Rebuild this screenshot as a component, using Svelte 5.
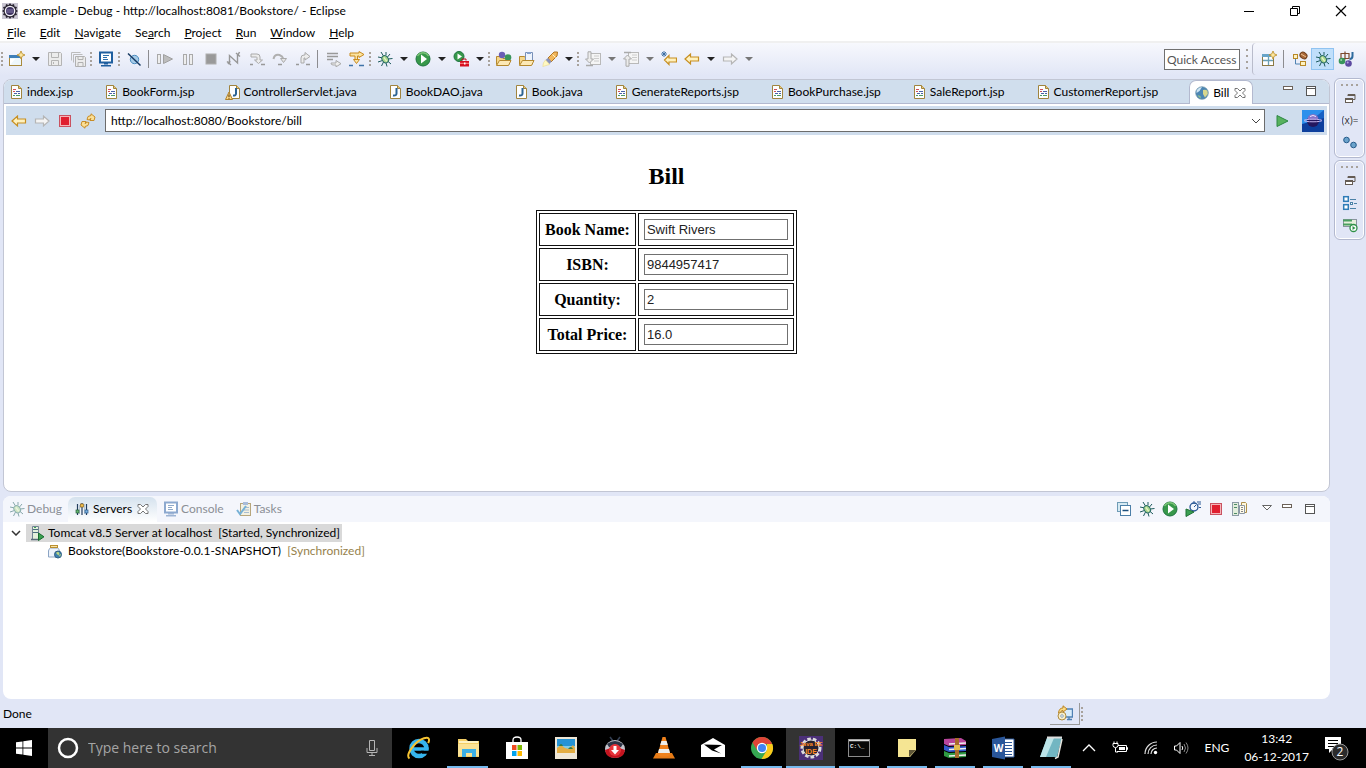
<script>
  const icons = {
    eclipse: `<rect width="16" height="16" fill="#c9c6d2"/><path d="M8 0l1.500 2 2.500-1 .5 2.500 2.500.5-1 2.500 2 1.500-2 1.500 1 2.500-2.500.5-.5 2.500-2.500-1-1.500 2-1.500-2-2.500 1-.5-2.500-2.500-.5 1-2.500-2-1.500 2-1.500-1-2.500 2.500-.5.5-2.500 2.500 1z" fill="#2b2733"/><circle cx="8" cy="8" r="5.300" fill="#f3f1f7"/><circle cx="8" cy="8" r="4" fill="#3e3360"/><path d="M4.500 7h7M4.500 9h7" stroke="#8a80b0"/>`,
    newwiz: `<rect x=".5" y="4.500" width="12" height="10" fill="#eef7fb" stroke="#a98a3c"/><rect x="0" y="4" width="12" height="3" fill="#3f7fb8"/><path d="M1 14V8h5z" fill="#fff"/><path d="M12 0l1.200 2.800L16 4l-2.800 1.200L12 8l-1.200-2.800L8 4l2.800-1.200z" fill="#fbe6a0" stroke="#b98a24" stroke-width=".8"/>`,
    save: `<path d="M1.500 1.500h12l1 1v12h-13z" fill="#ececec" stroke="#b4b4b4"/><path d="M4.500 1.500v5h7v-5M4.500 14.500v-5h7v5M6.500 11v2" fill="none" stroke="#b4b4b4"/>`,
    saveall: `<path d="M1.500 9.500v-8h9" fill="none" stroke="#bcbcbc"/><path d="M3.500 11.500v-8h9" fill="none" stroke="#bcbcbc"/><path d="M5.500 5.500h9l1 1v9h-10z" fill="#ececec" stroke="#b0b0b0"/><path d="M8 5.500v3h5v-3M8 15.500v-4h5v4" fill="none" stroke="#b0b0b0"/>`,
    monitor: `<rect x="2" y="1.500" width="12" height="10" fill="#fff" stroke="#1f5f9f" stroke-width="2"/><path d="M5 4.500h6M5 6.500h4M5 8.500h5" stroke="#2c6dab"/><path d="M6 12h4v1.500H6zM3 14h10v1.500H3z" fill="#1f5f9f"/>`,
    skip: `<circle cx="8.500" cy="8.500" r="4.200" fill="#a5cbe8" stroke="#4a8cc0"/><path d="M2 2.500L14.500 14.500" stroke="#173a63" stroke-width="1.500"/>`,
    resume: `<rect x=".5" y="3.500" width="3" height="9" fill="#eee" stroke="#a9a9a9"/><path d="M6.500 3.500v9l9-4.500z" fill="#bdbdbd" stroke="#a0a0a0"/>`,
    pause: `<rect x="3.500" y="3.500" width="3" height="10" fill="#eee" stroke="#aaa"/><rect x="9.500" y="3.500" width="3" height="10" fill="#eee" stroke="#aaa"/>`,
    stopgrey: `<rect x="3" y="3" width="10" height="10" fill="#999" stroke="#aeaeae"/>`,
    disconnect: `<path d="M3.500 12V4.500L11.500 12V4" fill="none" stroke="#979797" stroke-width="1.400"/><path d="M1 10.500l4 3.500M2 13l2-3M10 2l4 3.500M13.500 1l-2 4" stroke="#979797" stroke-width="1.500"/>`,
    into: `<path d="M2 3h6q3 0 3 3v3h2.500l-4 3.500-4-3.500H8V6.500Q8 6 7 6H2z" fill="#ececec" stroke="#aaa"/><path d="M1 13.500h3M12 13.500h4" stroke="#999" stroke-width="1.500"/>`,
    over: `<path d="M1.500 8q1-5 6-4 3 1 4 4" fill="none" stroke="#b0b0b0" stroke-width="2"/><path d="M8.500 7.500h6l-3 4z" fill="#e4e4e4" stroke="#aaa"/><path d="M6 13.500h4" stroke="#999" stroke-width="1.500"/>`,
    ret: `<path d="M6 12V7q0-3 3-3h1V1.500l5 4-5 3.500V7H9v5z" fill="#ececec" stroke="#aaa"/><path d="M1 13.500h3M11 13.500h4" stroke="#999" stroke-width="1.500"/>`,
    drop: `<path d="M1 2.500h11M1 5.500h11M1 8.500h6" stroke="#999" stroke-width="1.600"/><path d="M5 12h5V9.500l5 3.200-5 3.200V14H7q-2 0-2-2z" fill="#eee" stroke="#aaa"/>`,
    filters: `<path d="M1 2h9V.5l5 3-5 3V5H8.500v4H6V5H1z" fill="#fbe3a0" stroke="#c98a1c"/><path d="M4.500 8.500h6l-3 4z" fill="#fbe6a8" stroke="#c98a1c"/><path d="M0 14.500h4M10 14.500h5" stroke="#3f73a8" stroke-width="1.600"/>`,
    bug: `<path d="M4 1l2.500 4M9 1v3M13 3l-2.500 3M1 6l5 1M15.500 7.500L11 8M1 11l4.500-1.500M14 13l-3.500-3M4.500 15l2-4M10 15.500L9 12" stroke="#1d5a5c"/><ellipse cx="8.200" cy="8.200" rx="3" ry="3.800" transform="rotate(-35 8.200 8.200)" fill="#a9d68c" stroke="#2a6d66"/><path d="M6.800 6.300l3 4" stroke="#e7f5c8" stroke-width="1.300"/>`,
    run: `<circle cx="8" cy="8" r="7" fill="#37984a" stroke="#1f7440"/><path d="M2.500 5a6.300 6.300 0 0 1 11 0" fill="none" stroke="#79c276" stroke-width="1.500"/><path d="M6 3.500v9l6-4.500z" fill="#fff"/>`,
    ext: `<circle cx="6" cy="5.500" r="5" fill="#37984a" stroke="#1f7440"/><path d="M4.500 2.500v6l4.500-3z" fill="#fff"/><path d="M9 9.500V8h4v1.500" fill="none" stroke="#b80d1d"/><rect x="7" y="10" width="9" height="5.500" fill="#d5101f"/><path d="M7 12.300h9" stroke="#ff8b8b"/><path d="M11 11.500h1.500v2H11z" fill="#fff"/>`,
    opentype: `<path d="M.5 13.500v-8h5l1.500 2h6v6z" fill="#f6d68a" stroke="#b5892f"/><circle cx="6" cy="4" r="3.200" fill="#6a5db5"/><circle cx="12" cy="6.500" r="3.300" fill="#3a945a"/><path d="M.5 14.500l3-5h11.500l-2.500 5z" fill="#fde9b6" stroke="#b5892f"/>`,
    opentask: `<path d="M.5 13.500v-8h5l1.500 2h6v6z" fill="#f6d68a" stroke="#b5892f"/><path d="M6.500 1.500h7v8h-7z" fill="#edf3fc" stroke="#7890b8"/><path d="M8 1h4v2H8z" fill="#83a0cc"/><path d="M.5 14.500l3-5h11.500l-2.500 5z" fill="#fde9b6" stroke="#b5892f"/>`,
    torch: `<path d="M6 7L12 1h3.500L15 5l-6 6z" fill="#f2b75c" stroke="#b17522"/><path d="M10.500 3.500l3 3" stroke="#fff4c7"/><path d="M6 7l3.500 3.500L7.500 13 3.500 9z" fill="#8a93b8"/><path d="M3.500 9l4 4.500L.8 15.500q0-4 2.700-6.500z" fill="#fff8c0" stroke="#ead98c" stroke-width=".6"/>`,
    nextann: `<rect x="5.500" y="2.500" width="10" height="11" fill="#f5f5f5" stroke="#b9b9b9"/><path d="M9 5h5M9 7.500h5M9 10h5" stroke="#ccc"/><path d="M3 .8h3V8h2.500l-4 4-4-4H3z" fill="#ececec" stroke="#aaa"/><path d="M1 14.500h7" stroke="#aaa" stroke-width="1.500"/>`,
    prevann: `<rect x="5.500" y="1.500" width="10" height="11" fill="#f5f5f5" stroke="#b9b9b9"/><path d="M9 4h5M9 6.500h5M9 9h5" stroke="#ccc"/><path d="M3 15.200h3V8h2.500l-4-4-4 4H3z" fill="#ececec" stroke="#aaa"/><path d="M1 1.500h7" stroke="#aaa" stroke-width="1.500"/>`,
    lastedit: `<path d="M3.500 9l4.500-4.500V7h7.500v4H8v2.500z" fill="#fff1bd" stroke="#c78f22" stroke-width="1.200"/><path d="M3 0v6M0 3h6M1 1l4 4M5 1L1 5" stroke="#3469a0" stroke-width=".9"/>`,
    back: `<path d="M1 8l5.500-5V6H14.500v4H6.500v3z" fill="#fff1bd" stroke="#c78f22" stroke-width="1.200"/>`,
    fwd: `<path d="M15 8L9.500 3V6H1.500v4h8v3z" fill="#f4f4f4" stroke="#b5b5b5" stroke-width="1.200"/>`,
    newpersp: `<rect x="1.500" y="3.500" width="11" height="11" fill="#fff" stroke="#8b7a45"/><rect x="1" y="3" width="9" height="3" fill="#68a4c8"/><path d="M2 9.500h10M7.500 6v8" stroke="#6a9fb5" stroke-width="1.300"/><path d="M12 0l1.200 2.800L16 4l-2.800 1.200L12 8l-1.200-2.800L8 4l2.800-1.200z" fill="#fbe6a0" stroke="#b98a24" stroke-width=".8"/>`,
    jee: `<path d="M3.500 7v6h6M3.500 6V3" fill="none" stroke="#4f83b2"/><rect x="1.500" y="3.500" width="4" height="4" fill="#fff2c2" stroke="#b88927"/><rect x="8.500" y="10.500" width="5" height="4" fill="#fff2c2" stroke="#b88927"/><ellipse cx="11.500" cy="4.500" rx="3.700" ry="3" transform="rotate(35 11.500 4.500)" fill="#a9683a" stroke="#6f3d19"/><path d="M9 3l5 3" stroke="#edc18e"/>`,
    java: `<path d="M3 2.500h8v5H3zM7 .5v8" fill="none" stroke="#7c4a2e" stroke-width="1.200"/><path d="M14.500 1v4q0 3-3 3" fill="none" stroke="#2d6a9d" stroke-width="2"/><circle cx="4" cy="10" r="3.300" fill="#38965a"/><circle cx="10.500" cy="12.500" r="3.300" fill="#5d4aa0"/><circle cx="3.200" cy="9" r="1" fill="#9bd3a6"/><circle cx="9.700" cy="11.500" r="1" fill="#b3a6de"/>`,
    jsp: `<path d="M2.500 1.500h7l3 3v10h-10z" fill="#fdfefe" stroke="#a0843e"/><path d="M9.500 1.500v3h3" fill="#e9c877" stroke="#a0843e"/><path d="M4 5.500h3M4 7.500h2" stroke="#d0505a"/><path d="M7 7.500h4M5 9.500h3M9 9.500h2" stroke="#4a62a8"/><path d="M4 11.500h2M7 11.500h4" stroke="#4a9b68"/>`,
    javafile: `<path d="M2.500 1.500h7l3 3v10h-10z" fill="#fdfefe" stroke="#a0843e"/><path d="M9.500 1.500v3h3" fill="#e9c877" stroke="#a0843e"/><path d="M8.500 4v5.500q0 2.500-3.500 2" fill="none" stroke="#2b6393" stroke-width="2"/>`,
    javawarn: `<path d="M4.500 1.500h7l3 3v10h-10z" fill="#fdfefe" stroke="#a0843e"/><path d="M11.500 1.500v3h3" fill="#e9c877" stroke="#a0843e"/><path d="M11 4v5.500q0 2.500-3 2" fill="none" stroke="#2b6393" stroke-width="2"/><path d="M4 8l3.500 7.500H.5z" fill="#fbd98a" stroke="#b0812b"/><path d="M4 10.500v2.500M4 13.700v1" stroke="#6b4710" stroke-width="1.200"/>`,
    globe: `<circle cx="8" cy="8" r="6.300" fill="#4c86b4" stroke="#7196a8" stroke-width=".7"/><path d="M9 5q3-1 4.500 1l.3 3-2.800 3.500L9 9z" fill="#d8d78e"/><path d="M3.500 10l3 1 .5 2.500q-2.500-.5-3.500-3.500z" fill="#8dbf8d"/><path d="M2.500 8Q2 3 8 2L5.500 6z" fill="#cfe6f4"/>`,
    close: `<path d="M3 3.500h2.500L8 6l2.500-2.500H13v2L10.500 8l2.500 2.500v2h-2.500L8 10l-2.500 2.500H3v-2L5.500 8 3 5.500z" fill="#fff" stroke="#666" stroke-width=".9"/>`,
    min: `<rect x="3.500" y="3.500" width="9" height="3" fill="#fff" stroke="#6c6259"/>`,
    max: `<rect x="3.500" y="3.500" width="9" height="9" fill="#fff" stroke="#555"/><path d="M3 5.500h10" stroke="#555"/>`,
    stopred: `<rect x="2.500" y="2.500" width="11" height="11" fill="#f4b4b8" stroke="#c95260"/><rect x="4" y="4" width="8" height="8" fill="#e01e2f"/>`,
    refresh: `<path d="M7 6.500q0-4 4-4V.8L15 4l-1 3.500-4 0 1-2q-1.500 0-1.500 1.500z" fill="#fbdf96" stroke="#c78c27"/><path d="M9 9.500q0 4-4 4v1.700L1 12l1-3.500 4 0-1 2q1.500 0 1.500-1.500z" fill="#fbdf96" stroke="#c78c27"/>`,
    go: `<path d="M3 2.500v11L14 8z" fill="#58b25e" stroke="#2c8843"/>`,
    restore: `<path d="M6 5V3.500h7v5h-2" fill="none" stroke="#655c54"/><path d="M6 4h7" stroke="#655c54" stroke-width="2"/><rect x="3.500" y="7.500" width="7" height="4" fill="#fff" stroke="#655c54"/><path d="M3 8h8" stroke="#655c54" stroke-width="2"/>`,
    vars: `<text x="8" y="11" text-anchor="middle" font-family="Open Sans, sans-serif" font-size="10" fill="#333">(x)=</text>`,
    points: `<circle cx="4.500" cy="5" r="2.800" fill="#6ba3cc" stroke="#245a8a"/><circle cx="11.500" cy="10" r="2.800" fill="#6ba3cc" stroke="#245a8a"/>`,
    outline: `<rect x="1.700" y="1.700" width="4.600" height="4.600" fill="#fff" stroke="#2f7cb8" stroke-width="1.500"/><rect x="1.700" y="9.700" width="4.600" height="4.600" fill="#fff" stroke="#2f7cb8" stroke-width="1.500"/><path d="M8 4.500h6M8 13.500h6M12 8.500h3" stroke="#4c82a8"/><rect x="8.500" y="7.500" width="2" height="2" fill="#fff" stroke="#4c82a8"/>`,
    snip: `<rect x="1.500" y="2.500" width="13" height="7" fill="#e7f0dc" stroke="#8a94a0"/><path d="M1 3.500h9" stroke="#4aa060" stroke-width="2"/><path d="M1 7.500h9" stroke="#4aa060" stroke-width="2"/><circle cx="11.500" cy="11" r="3.500" fill="#fff" stroke="#2f9148" stroke-width="1.300"/><path d="M10.500 9v4l3-2z" fill="#2f9148"/>`,
    servers: `<path d="M3.500 3v11M8 2v12M12.500 3v11" stroke="#223d5e" stroke-width="1.200"/><path d="M5.500 4v9M10.500 3v10" stroke="#a9bcc8" stroke-width=".8"/><rect x="2" y="9" width="3" height="3" fill="#66b56f" stroke="#225f3a" stroke-width=".7"/><rect x="6.500" y="3" width="3" height="3" fill="#f2c14e" stroke="#91651a" stroke-width=".7"/><rect x="11" y="9" width="3" height="3" fill="#7cb3e0" stroke="#27588a" stroke-width=".7"/>`,
    console: `<rect x="2" y="1.500" width="12" height="10" fill="#fff" stroke="#8da9cf" stroke-width="2"/><path d="M5 4.500h6M5 6.500h4M5 8.500h5" stroke="#8fa9c9"/><path d="M5 12h6v1.500H5zM3 14h10v1.500H3z" fill="#9db4d4"/>`,
    tasks: `<rect x="4.500" y="2.500" width="10" height="12" fill="#f3f1e3" stroke="#b7a67c"/><rect x="7" y="1" width="5" height="3" fill="#a9bcda"/><path d="M8 6.500h5M8 9h5M8 11.500h5" stroke="#a9bccf"/><path d="M1 9l3 4 6-8" fill="none" stroke="#76b1d6" stroke-width="2"/>`,
    collapse: `<rect x="1.500" y="1.500" width="10" height="9" fill="#d6eaf3" stroke="#6f9cb6"/><rect x="4.500" y="4.500" width="10" height="10" fill="#fff" stroke="#4c7fa8"/><path d="M6.500 9.500h6" stroke="#1d4f7c" stroke-width="1.500"/>`,
    profile: `<circle cx="9" cy="6" r="4" fill="#f4f8fd" stroke="#2c5a96" stroke-width="1.300"/><path d="M9 0v3M9 6l2-2M12 1h4M13 3h3M14 6.500h2" stroke="#2c5a96"/><path d="M1 8v7.500L9 11z" fill="#3ba052" stroke="#1f7035"/>`,
    publish: `<rect x="1.500" y="1.500" width="6" height="13" fill="#e2eedc" stroke="#8b9ba6"/><path d="M3 3.500h3M3 6.500h3M3 12.500h3" stroke="#4f8b68"/><path d="M10.500 1.500h4l1 1v9h-5z" fill="#fff7dc" stroke="#ad8f49"/><path d="M8.500 4.500h5v8h-5z" fill="#fffbe9" stroke="#8a97a5"/><path d="M10 6.500h2M10 8.500h2M10 10.500h2" stroke="#888"/>`,
    menu: `<path d="M3.500 4.500h9L8 9z" fill="#fff" stroke="#666"/>`,
    server: `<path d="M3.500 1.500h6v13h-6z" fill="#e3f0dc" stroke="#718494"/><path d="M4 4.500h5M4 7.500h5" stroke="#4b6e7e"/><path d="M5 2.500h2" stroke="#3ba052"/><path d="M2 14.500h8" stroke="#596b79" stroke-width="1.500"/><path d="M9.500 8v7.500l5.500-3.700z" fill="#3ba052" stroke="#176b30"/>`,
    module: `<path d="M3.500 5h7q2 1 2 3v6h-11V8q0-2 2-3z" fill="#eef3fb" stroke="#8ba4c4"/><rect x="3.500" y="2.500" width="7" height="2" fill="#fbe3a1" stroke="#b98f33"/><circle cx="11" cy="11.500" r="3.500" fill="#3d7fae" stroke="#2f5f84"/><path d="M9 10q2-2 3.500 0l-1 2.500zM12 12l2-1-1 3z" fill="#bfd980"/>`,
    launch: `<path d="M9 4h6.500v8H9" fill="#d8ecfb" stroke="#4f81b4" stroke-width="1.400"/><path d="M10 14.500h5M12 12v2" stroke="#4f81b4" stroke-width="1.400"/><path d="M1.500 8Q2 3 6 3V.8L10 4 6 7V5.500Q4 5 3.500 8z" fill="#fbdc86" stroke="#bb8420"/><circle cx="5" cy="11" r="4" fill="#f7edc9" stroke="#b08d3e"/><circle cx="5" cy="11" r="1.300" fill="#fff" stroke="#8fa7b8"/>`,
    orb: `<rect width="22" height="22" fill="#1761c4"/><path d="M0 0h22L0 18z" fill="#2c90ec"/><path d="M0 14l22-6v14H0z" fill="#0d3f9d"/><circle cx="11" cy="11" r="6" fill="#24175e"/><path d="M5.500 9.500a5.500 5.500 0 0 1 11 0z" fill="#8573c9"/><ellipse cx="11" cy="10.500" rx="9" ry="1.300" fill="none" stroke="#c4b6ef"/><path d="M8 6.500q3-2 6 0" stroke="#efe8ff" fill="none"/>`
  };

  const apps = {
    ie: `<circle cx="12" cy="12.500" r="7.500" fill="none" stroke="#36b5ee" stroke-width="4.500"/><path d="M6 13h15.500" stroke="#36b5ee" stroke-width="3.500"/><path d="M14 14.700h10v3h-9z" fill="#000"/><path d="M2.500 22.500C-2 19 8 5 17 2.200c5-1.600 6 .8 4.200 5" fill="none" stroke="#f7c432" stroke-width="2"/>`,
    explorer: `<path d="M2 3h8l2 2h11v16H2z" fill="#f3ce66"/><rect x="3" y="5" width="19" height="2" fill="#fff3c4"/><path d="M2 8h21v12H2z" fill="#fbe294"/><path d="M6 21v-8h14v8h-4v-4h-6v4z" fill="#3cb0e6"/>`,
    store: `<path d="M8 6V4q0-3 4-3t4 3v2" fill="none" stroke="#fff" stroke-width="1.300"/><path d="M1 6h22v17H1z" fill="#fff"/><path d="M7 9h4.500v5H7z" fill="#f04e23"/><path d="M12.500 9H17v5h-4.500z" fill="#7eb901"/><path d="M7 15h4.500v5H7z" fill="#02a3ee"/><path d="M12.500 15H17v5h-4.500z" fill="#feb801"/>`,
    photo: `<path d="M1 1h22v22H1z" fill="#efe7d6"/><path d="M3 3h18v14H3z" fill="#2693d4"/><path d="M3 10h18v4H3z" fill="#82cbe4"/><path d="M3 17v-5l4-3 4 3 4 1 4-4 2 3v5z" fill="#e3ad43"/><path d="M5 10q2-4 4 0zM14 13q3-4 5 0z" fill="#377941"/>`,
    ytd: `<path d="M7 1l3 4M17 1l-3 4" stroke="#354054" stroke-width="1.500"/><ellipse cx="12" cy="13" rx="10" ry="9" fill="#c3c5cd"/><path d="M4 8q8-6 16 0l-2 3H6z" fill="#2c3446"/><path d="M2 14q10-5 20 0-1 8-10 8T2 14z" fill="#c4141f"/><circle cx="12" cy="14" r="6" fill="#e8343a"/><path d="M10.500 10h3v4H16l-4 4.500L8 14h2.500z" fill="#fff"/>`,
    vlc: `<path d="M4 17h16l3 5.500H1z" fill="#e77b16"/><path d="M10.500 1h3l5 18q-6.500 3-13 0z" fill="#f0821c"/><path d="M9.400 5h5.200l1.200 4H8.200zM7 13h10l1 4H6z" fill="#eeeeea"/>`,
    mail: `<path d="M0 9l12-7 12 7v12H0z" fill="#fff"/><path d="M3 8.500L21 9l-8 4.500 7 4-9-3z" fill="#000"/>`,
    chrome: `<circle cx="12" cy="12" r="11" fill="#36a852"/><path d="M2.500 6.500A11 11 0 0 1 21.500 6.500L22 8H12l-5 6z" fill="#df4437"/><path d="M22.300 8A11 11 0 0 1 11.500 23L17 14V8z" fill="#fbc91b"/><circle cx="12" cy="12" r="5.200" fill="#fff"/><circle cx="12" cy="12" r="4" fill="#4285f4"/>`,
    jee: `<rect width="24" height="24" fill="#4b3078"/><circle cx="12" cy="12" r="9" fill="none" stroke="#ddd" stroke-width="3" stroke-dasharray="3.500 2"/><circle cx="12" cy="12" r="8" fill="#27212f" stroke="#ddd"/><text x="12" y="10" text-anchor="middle" font-family="Liberation Sans, sans-serif" font-size="6" font-weight="700" fill="#ff8a24">Java EE</text><text x="12" y="18" text-anchor="middle" font-family="Liberation Sans, sans-serif" font-size="7" font-weight="700" fill="#ff8a24">IDE</text>`,
    cmd: `<rect x="1.500" y="3.500" width="21" height="17" fill="#080808" stroke="#8c8c8c"/><path d="M2 4.500h20" stroke="#ddd" stroke-width="1.500"/><text x="3" y="12" font-family="Liberation Mono, monospace" font-size="6" font-weight="700" fill="#eee">C:\\_</text>`,
    sticky: `<path d="M3 3h18v11l-6 7H3z" fill="#f5e593"/><path d="M21 14l-7 7v-7z" fill="#5f5738"/>`,
    winrar: `<path d="M1 3l17-1 5 3v4l-17 1-5-2z" fill="#b9459c"/><path d="M1 9l5 2 17-1v5l-17 1-5-2z" fill="#3358cb"/><path d="M1 15l5 2 17-1v5l-17 1-5-2z" fill="#2f9a43"/><path d="M6 8l17-1M6 13.500l17-1M6 20l17-1" stroke="#eee" stroke-width="1.300"/><path d="M12 2h4v20h-4z" fill="#a86b2c"/><rect x="11" y="9" width="6" height="5" fill="#e3bd50"/>`,
    word: `<path d="M12 3h11v18H12z" fill="#fff" stroke="#2a5699"/><path d="M14 6.500h7M14 9.500h7M14 12.500h7M14 15.500h7M14 18.500h7" stroke="#2a5699"/><path d="M1 3l13-2.500v23L1 21z" fill="#2a5699"/><text x="7.500" y="16" text-anchor="middle" font-family="Open Sans, sans-serif" font-size="10" font-weight="700" fill="#fff">W</text>`,
    notepad: `<path d="M8 2h15l-5 19H1z" fill="#72b6c2"/><path d="M8 2h7L7 21H1z" fill="#bce4e8"/><path d="M8 1.500h15" stroke="#ddd" stroke-width="2"/><path d="M23 3l-4 18-3 1.500" fill="none" stroke="#e6e6df" stroke-width="1.500"/>`
  };

  const I = (icon, label) => ({ icon, label });
  const tri = { kind: 'tri', label: 'Show options' };
  const triOff = { kind: 'tri', off: true, label: 'Show options' };
  const dots = { kind: 'dots' };
  const line = { kind: 'line' };
  const toolbar = [
    dots, I('newwiz', 'New'), tri, I('save', 'Save'), I('saveall', 'Save All'), dots,
    I('monitor', 'Open Console'), dots, I('skip', 'Skip All Breakpoints'), line,
    I('resume', 'Resume'), I('pause', 'Suspend'), I('stopgrey', 'Terminate'), I('disconnect', 'Disconnect'),
    I('into', 'Step Into'), I('over', 'Step Over'), I('ret', 'Step Return'), line,
    I('drop', 'Drop to Frame'), I('filters', 'Use Step Filters'), dots,
    I('bug', 'Debug'), tri, I('run', 'Run'), tri, I('ext', 'External Tools'), tri, dots,
    I('opentype', 'Open Type'), I('opentask', 'Open Task'), I('torch', 'Search'), tri, dots,
    I('nextann', 'Next Annotation'), triOff, I('prevann', 'Previous Annotation'), triOff,
    I('lastedit', 'Last Edit Location'), I('back', 'Back'), tri, I('fwd', 'Forward'), triOff
  ];

  const menus = [['', 'F', 'ile'], ['', 'E', 'dit'], ['', 'N', 'avigate'], ['Se', 'a', 'rch'], ['', 'P', 'roject'], ['', 'R', 'un'], ['', 'W', 'indow'], ['', 'H', 'elp']];

  const tabs = [
    ['jsp', 'index.jsp'], ['jsp', 'BookForm.jsp'], ['javawarn', 'ControllerServlet.java'],
    ['javafile', 'BookDAO.java'], ['javafile', 'Book.java'], ['jsp', 'GenerateReports.jsp'],
    ['jsp', 'BookPurchase.jsp'], ['jsp', 'SaleReport.jsp'], ['jsp', 'CustomerReport.jsp']
  ];

  const bill = $state([
    { id: 'book', label: 'Book Name:', value: 'Swift Rivers' },
    { id: 'isbn', label: 'ISBN:', value: '9844957417' },
    { id: 'quantity', label: 'Quantity:', value: '2' },
    { id: 'total', label: 'Total Price:', value: '16.0' }
  ]);

  const viewTools = [I('collapse', 'Collapse All'), I('bug', 'Debug server'), I('run', 'Start server'), I('profile', 'Profile server'), I('stopred', 'Stop server'), I('publish', 'Publish')];

  const pinned = [['ie', 'Internet Explorer'], ['explorer', 'File Explorer', 1], ['store', 'Store'], ['photo', 'Photos'], ['ytd', 'Downloader'], ['vlc', 'VLC'], ['mail', 'Mail'], ['chrome', 'Chrome', 1], ['jee', 'Eclipse', 2]];
  const opened = [['cmd', 'Command Prompt', 1], ['sticky', 'Sticky Notes', 1], ['winrar', 'WinRAR', 1], ['word', 'Word', 1], ['notepad', 'Notepad', 1]];

  let url = $state('http://localhost:8080/Bookstore/bill');
</script>

{#snippet ico(name)}
  <svg class="ico" viewBox="0 0 16 16" aria-hidden="true">{@html icons[name]}</svg>
{/snippet}

{#snippet app(a)}
  <button class="app" class:open={a[2] === 1} class:current={a[2] === 2} aria-label={a[1]}>
    <svg viewBox="0 0 24 24" aria-hidden="true">{@html apps[a[0]]}</svg>
  </button>
{/snippet}

<div class="screen">
  <header class="title">
    {@render ico('eclipse')}
    <span class="grow">example - Debug - http://localhost:8081/Bookstore/ - Eclipse</span>
    <button class="win" aria-label="Minimize"><svg viewBox="0 0 12 12"><path d="M1 6.500h10" stroke="#000" /></svg></button>
    <button class="win" aria-label="Restore"><svg viewBox="0 0 12 12"><path d="M3.500 3V1.500h7v7H9M1.500 3.500h7v7h-7z" fill="none" stroke="#000" /></svg></button>
    <button class="win" aria-label="Close"><svg viewBox="0 0 12 12"><path d="M1 1l10 10M11 1L1 11" stroke="#000" stroke-width="1.200" /></svg></button>
  </header>

  <nav class="menubar">
    {#each menus as m}<button>{m[0]}<u>{m[1]}</u>{m[2]}</button>{/each}
  </nav>

  <div class="toolbar">
    {#each toolbar as t}
      {#if t.kind === 'dots'}<span class="dots"></span>
      {:else if t.kind === 'line'}<span class="line"></span>
      {:else if t.kind === 'tri'}<button class="tri" class:off={t.off} aria-label={t.label}></button>
      {:else}<button class="tool" aria-label={t.label}>{@render ico(t.icon)}</button>{/if}
    {/each}
    <span class="grow"></span>
    <input class="quick" aria-label="Quick Access" placeholder="Quick Access" />
    <span class="dots wide"></span>
    <div class="persp">
      <button class="tool" aria-label="Open Perspective">{@render ico('newpersp')}</button>
      <span class="line"></span>
      <button class="tool" aria-label="Java EE">{@render ico('jee')}</button>
      <button class="tool on" aria-label="Debug">{@render ico('bug')}</button>
      <button class="tool" aria-label="Java">{@render ico('java')}</button>
    </div>
  </div>

  <main class="bench">
    <div class="stack">
      <section class="editor">
        <div class="tabs">
          {#each tabs as t}<button class="tab">{@render ico(t[0])}<span>{t[1]}</span></button>{/each}
          <button class="tab active">{@render ico('globe')}<span>Bill</span>{@render ico('close')}</button>
          <span class="grow"></span>
          <button class="tool" aria-label="Minimize">{@render ico('min')}</button>
          <button class="tool" aria-label="Maximize">{@render ico('max')}</button>
        </div>
        <div class="nav">
          <button class="tool" aria-label="Back">{@render ico('back')}</button>
          <button class="tool" aria-label="Forward">{@render ico('fwd')}</button>
          <button class="tool" aria-label="Stop">{@render ico('stopred')}</button>
          <button class="tool" aria-label="Refresh">{@render ico('refresh')}</button>
          <div class="combo">
            <input aria-label="Address" bind:value={url} />
            <button aria-label="Show history"><svg viewBox="0 0 10 6"><path d="M1 1l4 4 4-4" fill="none" stroke="#444" /></svg></button>
          </div>
          <button class="tool" aria-label="Go">{@render ico('go')}</button>
          <svg class="orb" viewBox="0 0 22 22" aria-hidden="true">{@html icons.orb}</svg>
        </div>
        <div class="page">
          <h2>Bill</h2>
          <table>
            <tbody>
              {#each bill as row}
                <tr>
                  <th scope="row"><label for={row.id}>{row.label}</label></th>
                  <td><input id={row.id} bind:value={row.value} /></td>
                </tr>
              {/each}
            </tbody>
          </table>
        </div>
      </section>

      <section class="views">
        <div class="vtabs">
          <button class="vtab dim">{@render ico('bug')}<span>Debug</span></button>
          <button class="vtab active">{@render ico('servers')}<span>Servers</span>{@render ico('close')}</button>
          <button class="vtab">{@render ico('console')}<span>Console</span></button>
          <button class="vtab">{@render ico('tasks')}<span>Tasks</span></button>
          <span class="grow"></span>
          {#each viewTools as t}<button class="tool" aria-label={t.label}>{@render ico(t.icon)}</button>{/each}
          <button class="tool vmenu" aria-label="View Menu">{@render ico('menu')}</button>
          <button class="tool" aria-label="Minimize">{@render ico('min')}</button>
          <button class="tool" aria-label="Maximize">{@render ico('max')}</button>
        </div>
        <ul class="tree">
          <li>
            <svg class="chev" viewBox="0 0 10 6" aria-hidden="true"><path d="M1 1l4 4 4-4" fill="none" stroke="#333" stroke-width="1.500" /></svg>
            <span class="sel">{@render ico('server')}<span>Tomcat v8.5 Server at localhost&nbsp; [Started, Synchronized]</span></span>
          </li>
          <li class="child">{@render ico('module')}<span>Bookstore(Bookstore-0.0.1-SNAPSHOT)&nbsp; <em>[Synchronized]</em></span></li>
        </ul>
      </section>
    </div>

    <aside class="trim">
      <div class="box">
        <span class="grip"></span>
        <button aria-label="Restore">{@render ico('restore')}</button>
        <button aria-label="Variables">{@render ico('vars')}</button>
        <button aria-label="Breakpoints">{@render ico('points')}</button>
      </div>
      <div class="box">
        <span class="grip"></span>
        <button aria-label="Restore">{@render ico('restore')}</button>
        <button aria-label="Outline">{@render ico('outline')}</button>
        <button aria-label="Snippets">{@render ico('snip')}</button>
      </div>
    </aside>
  </main>

  <footer class="status">
    <span class="grow">Done</span>
    <button class="launch" aria-label="Background updates">{@render ico('launch')}</button>
    <span class="dots"></span>
  </footer>

  <div class="taskbar">
    <button class="start" aria-label="Start"><svg viewBox="0 0 16 16"><path d="M0 2.300L6.500 1.400v6.200H0zM7.300 1.300L16 0v7.600H7.300zM0 8.400h6.500v6.200L0 13.700zM7.300 8.400H16V16l-8.700-1.300z" fill="#fff" /></svg></button>
    <label class="search">
      <svg class="ring" viewBox="0 0 22 22" aria-hidden="true"><circle cx="11" cy="11" r="9" fill="none" stroke="#fff" stroke-width="2.500" /></svg>
      <input aria-label="Search" placeholder="Type here to search" />
      <svg class="mic" viewBox="0 0 12 18" aria-hidden="true"><path d="M3.500 1.500h5v10h-5zM1 9v4.500h10V9M6 14v3M3 16.500h6" fill="none" stroke="#b5b5b5" /></svg>
    </label>
    <div class="apps">{#each pinned as a}{@render app(a)}{/each}</div>
    <div class="apps second">{#each opened as a}{@render app(a)}{/each}</div>
    <span class="grow"></span>
    <div class="tray">
      <svg viewBox="0 0 16 16"><path d="M2 11l6-6 6 6" fill="none" stroke="#fff" stroke-width="1.300" /></svg>
      <svg viewBox="0 0 16 16"><path d="M6 5.500h8.500v6H5M14.500 7.500h1v2h-1" fill="none" stroke="#fff" /><path d="M7 7h6v3H7z" fill="#fff" /><path d="M1 3.500h5v2q0 2-2.500 2T1 5.500zM2 1.500v2M5 1.500v2M3.500 8v4H6" fill="none" stroke="#fff" /></svg>
      <svg viewBox="0 0 16 16"><path d="M2 14A12 12 0 0 1 14 2M5 14a9 9 0 0 1 9-9M8 14a6 6 0 0 1 6-6" fill="none" stroke="#ddd" stroke-width="1.200" /><circle cx="12.500" cy="12.500" r="1.700" fill="#fff" /></svg>
      <svg viewBox="0 0 16 16"><path d="M.5 6h2L6 2.500v11L2.500 10h-2z" fill="none" stroke="#fff" /><path d="M8 6q1.500 2 0 4" fill="none" stroke="#fff" /><path d="M10 4q3 4 0 8M12 2.500q4 5.500 0 11" fill="none" stroke="#888" /></svg>
      <span class="lang">ENG</span>
      <span class="clock">13:42<br />06-12-2017</span>
      <button class="notes" aria-label="Notifications"><svg viewBox="0 0 26 26"><path d="M1 2h16v12H9l-4 4v-4H1z" fill="#fff" /><path d="M4 5.500h10M4 8.500h10M4 11.500h6" stroke="#000" /><circle cx="16" cy="17" r="8" fill="#2b2b2b" stroke="#999" /><text x="16" y="21" text-anchor="middle" font-family="Open Sans, sans-serif" font-size="12" fill="#fff">2</text></svg></button>
    </div>
  </div>
</div>

<style>
  :global(body) { margin: 0; }
  .screen { display: flex; flex-direction: column; height: 100vh; min-height: 640px; overflow: hidden; background: #e1e6f6; color: #000; font: 12px/16px Lato, "Open Sans", sans-serif; }
  button, input { font: inherit; color: inherit; margin: 0; padding: 0; border: 0; background: none; box-sizing: border-box; }
  svg { display: block; flex: none; }
  .ico { width: 16px; height: 16px; }
  .grow { flex: 1; }

  .title { display: flex; align-items: center; gap: 5px; height: 22px; flex: none; padding: 0 5px 0 2px; background: #fff; }
  .win { width: 41px; height: 22px; display: flex; align-items: center; justify-content: center; }
  .win svg { width: 12px; height: 12px; }
  .menubar { display: flex; gap: 14px; height: 19px; flex: none; padding: 0 7px; background: #fff; border-bottom: 2px solid #f0f0f0; }
  .menubar button { height: 20px; padding-top: 1px; white-space: nowrap; }

  .toolbar { display: flex; align-items: center; height: 33px; flex: none; padding-bottom: 1px; box-sizing: border-box; background: linear-gradient(#f7f8fd, #e1e6f6); }
  .tool { display: flex; align-items: center; justify-content: center; width: 23px; height: 22px; flex: none; }
  .tool.on { background: #c0dffb; outline: 1px solid #90c3f1; outline-offset: -1px; }
  .tri { width: 15px; height: 22px; display: flex; align-items: center; justify-content: center; flex: none; }
  .tri::before { content: ""; border: 4px solid transparent; border-top-color: #222; border-bottom: 0; }
  .tri.off::before { border-top-color: #777; }
  .dots { width: 5px; height: 14px; flex: none; background: linear-gradient(#a8a29c 2px, transparent 2px) 1px 0 / 2px 4px repeat-y; }
  .dots.wide { width: 12px; height: 20px; background: linear-gradient(#a8a29c 2px, transparent 2px) 6px 0 / 2px 6px repeat-y; }
  .line { width: 8px; height: 18px; flex: none; background: linear-gradient(#8c8c90, #8c8c90) 3px 0 / 1px 100% no-repeat; }
  .quick { width: 76px; height: 21px; padding: 0 2px; background: #fff; border: 1px solid #707070; }
  .quick::placeholder { color: #555; opacity: 1; }
  .persp { display: flex; align-items: center; align-self: stretch; padding: 0 9px 0 4px; border-left: 1px solid #b9bccb; border-radius: 4px 0 0 4px; }

  .bench { flex: 1; display: flex; gap: 4px; min-height: 0; padding: 3px 1px 0 3px; }
  .stack { flex: 1; min-width: 0; display: flex; flex-direction: column; gap: 4px; }
  .editor { flex: 103 1 0; display: flex; flex-direction: column; background: #fff; border: 1px solid #c2c6d4; border-radius: 8px; overflow: hidden; box-sizing: border-box; }
  .tabs { display: flex; height: 23px; flex: none; padding: 0 7px 0 5px; background: #d0deed; border-bottom: 1px solid #b3b9cf; }
  .tab { display: flex; align-items: center; gap: 2px; padding-right: 31px; white-space: nowrap; }
  .tab.active { background: #fff; border: 1px solid #b3b9cf; border-bottom: 0; border-radius: 7px 7px 0 0; padding: 0 4px; gap: 3px; margin-bottom: -1px; }
  .nav { display: flex; align-items: center; height: 29px; flex: none; margin: 2px 2px 0; padding: 0 3px 0 1px; background: #cfdded; }
  .combo { flex: 1; display: flex; height: 23px; margin: 0 5px 0 6px; background: #fff; border: 1px solid #6c6c6c; box-sizing: border-box; }
  .combo input { flex: 1; padding: 0 5px; }
  .combo button { width: 17px; display: flex; align-items: center; justify-content: center; }
  .combo svg, .chev { width: 10px; height: 6px; }
  .orb { width: 22px; height: 22px; margin-left: 9px; }
  .page { flex: 1; font-family: "Liberation Serif", serif; }
  h2 { margin: 27px 0 19px; font-size: 24px; line-height: 29px; text-align: center; }
  table { margin: 0 auto; border: 1px solid #111; border-spacing: 2px; border-collapse: separate; }
  th, td { border: 1px solid #111; padding: 5px; height: 21px; font-size: 16px; line-height: 18px; }
  td input { display: block; width: 144px; height: 21px; padding: 0 2px; border: 1px solid #707070; font: 13px "Liberation Sans", sans-serif; color: #222; }

  .views { flex: 51 1 0; display: flex; flex-direction: column; background: #fff; border-radius: 8px; overflow: hidden; }
  .vtabs { display: flex; height: 26px; flex: none; padding: 1px 9px 0 0; box-sizing: border-box; background: #f4f6fc; align-items: center; }
  .vtab { display: flex; align-items: center; gap: 2px; height: 25px; padding: 0 6px; color: #8b8f96; }
  .vtab.dim .ico { opacity: 0.5; }
  .vtab.active { color: #000; background: linear-gradient(#d5e2ee, #fff); border-radius: 7px 7px 0 0; gap: 3px; }
  .vmenu { width: 17px; margin-left: 8px; }
  .tree { list-style: none; margin: 2px 0 0; padding: 0; }
  .tree li { display: flex; align-items: center; height: 18px; padding-left: 8px; white-space: nowrap; }
  .tree li.child { padding-left: 44px; gap: 5px; }
  .sel { display: flex; align-items: center; gap: 3px; height: 18px; margin-left: 5px; padding: 0 2px 0 3px; background: #d9d9d9; }
  em { font-style: normal; color: #96824c; }

  .trim { width: 31px; display: flex; flex-direction: column; gap: 2px; margin-top: -1px; }
  .box { display: flex; flex-direction: column; align-items: center; height: 80px; box-sizing: border-box; border: 1px solid #b3b9cf; border-radius: 6px; box-shadow: inset 0 0 0 1px #fff; }
  .box button { height: 22px; display: flex; align-items: center; }
  .grip { width: 18px; height: 2px; margin: 5px 0 2px; background: linear-gradient(90deg, #a8a29c 2px, transparent 2px) 0 0 / 5px 2px; }

  .status { display: flex; align-items: center; height: 29px; flex: none; padding: 0 281px 0 3px; }
  .launch { width: 30px; height: 22px; display: flex; align-items: center; justify-content: center; border-right: 1px solid #999; border-bottom: 1px solid #999; }

  .taskbar { display: flex; height: 40px; flex: none; background: #000; color: #fff; }
  .start { width: 48px; display: flex; align-items: center; justify-content: center; }
  .start svg { width: 16px; height: 16px; }
  .search { width: 344px; display: flex; align-items: center; padding: 0 14px 0 9px; background: #333; box-sizing: border-box; margin-right: 2px; }
  .search input { flex: 1; min-width: 0; padding-left: 9px; font-size: 14px; font-family: "Open Sans", sans-serif; }
  .search input::placeholder { color: #a5a5a5; opacity: 1; }
  .ring { width: 22px; height: 22px; }
  .mic { width: 12px; height: 18px; }
  .apps { display: flex; }
  .app { position: relative; width: 49px; height: 40px; display: flex; align-items: center; justify-content: center; }
  .second .app { width: 48px; }
  .app svg { width: 24px; height: 24px; }
  .app.open::after, .app.current::after { content: ""; position: absolute; left: 4px; right: 4px; bottom: 0; height: 2px; background: #76b9ed; }
  .app.current { background: #333; }
  .app.current::after { left: 0; right: 0; }
  .tray { display: flex; align-items: center; gap: 15px; padding-right: 16px; }
  .tray > svg { width: 16px; height: 16px; }
  .clock { text-align: center; line-height: 18px; white-space: nowrap; }
  .notes svg { width: 26px; height: 26px; }
</style>
